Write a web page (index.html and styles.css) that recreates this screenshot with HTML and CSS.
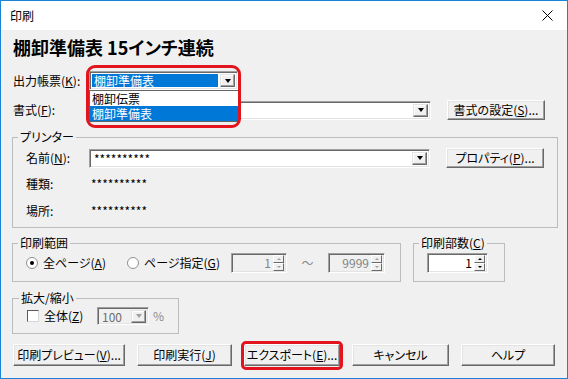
FILE: index.html
```html
<!DOCTYPE html>
<html lang="ja">
<head>
    <meta charset="UTF-8">
    <title>印刷</title>
    <link rel="stylesheet" href="styles.css">
</head>
<body>
    <div class="window">
        <div class="titlebar">
            <span class="title">印刷</span>
            <svg class="close" width="11" height="11" viewBox="0 0 11 11">
                <path d="M0.5 0.5 L10.5 10.5 M10.5 0.5 L0.5 10.5" stroke="#000" stroke-width="1" fill="none"/>
            </svg>
        </div>

        <div class="content">
            <h1 class="heading">棚卸準備表 15インチ連続</h1>

            <div class="row row-report">
                <span class="label">出力帳票(<u>K</u>):</span>
                <div class="combo-wrap">
                    <div class="combo combo-report">
                        <span class="combo-text selected">棚卸準備表</span>
                        <span class="drop-btn"><i class="tri-down"></i></span>
                    </div>
                    <ul class="droplist">
                        <li>棚卸伝票</li>
                        <li class="active">棚卸準備表</li>
                    </ul>
                    <div class="mark mark-combo"></div>
                </div>
            </div>

            <div class="row row-format">
                <span class="label">書式(<u>F</u>):</span>
                <div class="combo combo-wide">
                    <span class="combo-text"></span>
                    <span class="drop-btn"><i class="tri-down"></i></span>
                </div>
                <button class="btn btn-side">書式の設定(<u>S</u>)...</button>
            </div>

            <fieldset class="group group-printer">
                <legend>プリンター</legend>
                <div class="row">
                    <span class="label label-in">名前(<u>N</u>):</span>
                    <div class="combo combo-name">
                        <span class="combo-text stars">**********</span>
                        <span class="drop-btn"><i class="tri-down"></i></span>
                    </div>
                    <button class="btn btn-side">プロパティ(<u>P</u>)...</button>
                </div>
                <div class="row info-row info-kind">
                    <span class="label label-in">種類:</span>
                    <span class="stars value">**********</span>
                </div>
                <div class="row info-row info-place">
                    <span class="label label-in">場所:</span>
                    <span class="stars value">**********</span>
                </div>
            </fieldset>

            <div class="row range-row">
                <fieldset class="group group-range">
                    <legend>印刷範囲</legend>
                    <div class="row">
                        <label class="opt opt-all"><span class="radio checked"></span>全ページ(<u>A</u>)</label>
                        <label class="opt opt-page"><span class="radio"></span>ページ指定(<u>G</u>)</label>
                        <div class="spin spin-from disabled">
                            <span class="spin-val">1</span>
                            <span class="spin-btns"><span class="sb"><i class="tri-up"></i></span><span class="sb"><i class="tri-dn"></i></span></span>
                        </div>
                        <span class="tilde">～</span>
                        <div class="spin spin-to disabled">
                            <span class="spin-val">9999</span>
                            <span class="spin-btns"><span class="sb"><i class="tri-up"></i></span><span class="sb"><i class="tri-dn"></i></span></span>
                        </div>
                    </div>
                </fieldset>
                <fieldset class="group group-copies">
                    <legend>印刷部数(<u>C</u>)</legend>
                    <div class="spin spin-copies">
                        <span class="spin-val">1</span>
                        <span class="spin-btns"><span class="sb"><i class="tri-up"></i></span><span class="sb"><i class="tri-dn"></i></span></span>
                    </div>
                </fieldset>
            </div>

            <fieldset class="group group-zoom">
                <legend>拡大/縮小</legend>
                <div class="row">
                    <label class="opt opt-whole"><span class="check"></span>全体(<u>Z</u>)</label>
                    <div class="combo combo-zoom disabled">
                        <span class="combo-text">100</span>
                        <span class="drop-btn"><i class="tri-down"></i></span>
                    </div>
                    <span class="percent">%</span>
                </div>
            </fieldset>

            <div class="row buttons">
                <button class="btn b-preview">印刷プレビュー(<u>V</u>)...</button>
                <button class="btn b-print">印刷実行(<u>J</u>)</button>
                <div class="btn-wrap">
                    <button class="btn b-export">エクスポート(<u>E</u>)...</button>
                    <div class="mark mark-btn"></div>
                </div>
                <button class="btn b-cancel">キャンセル</button>
                <button class="btn b-help">ヘルプ</button>
            </div>
        </div>
    </div>
</body>
</html>
```

FILE: styles.css
```css
* {
    box-sizing: border-box;
}
body {
    margin: 0;
    font-family: "Noto Sans CJK JP", "Noto Sans", sans-serif;
    font-size: 12px;
    line-height: 14px;
    color: #000;
    font-feature-settings: "palt";
}
u {
    text-decoration-thickness: 1px;
    text-underline-offset: 1px;
}
.window {
    width: 568px;
    height: 379px;
    border: 1px solid #1883d7;
    background-color: #f0f0f0;
    overflow: hidden;
}
.titlebar {
    height: 29px;
    background-color: #fff;
    display: flex;
    align-items: center;
    justify-content: space-between;
    padding: 0 14px 0 9px;
}
.title {
    padding-top: 1px;
}
.content {
    padding: 7px 0 0 11px;
}
.heading {
    margin: 0;
    padding-left: 1px;
    font-size: 18px;
    line-height: 20px;
    font-weight: bold;
}
.row {
    display: flex;
    align-items: center;
}
.label {
    width: 77px;
    padding-left: 1px;
}
.label-in {
    width: 63px;
    padding-left: 0;
}
.row-report {
    margin-top: 14px;
    height: 19px;
}
.row-format {
    margin-top: 10px;
    height: 20px;
}

/* combo box */
.combo-wrap {
    position: relative;
}
.combo {
    height: 19px;
    background-color: #fff;
    border: 1px solid;
    border-color: #a0a0a0 #fff #fff #a0a0a0;
    box-shadow: inset 1px 1px #696969, inset -1px -1px #e3e3e3;
    display: flex;
    align-items: center;
    padding: 2px;
}
.combo-report {
    width: 149px;
}
.combo-wide {
    width: 342px;
}
.combo-name {
    width: 341px;
}
.combo-zoom {
    width: 52px;
    height: 18px;
}
.combo.disabled {
    background-color: #f0f0f0;
    color: #6d6d6d;
}
.combo-text {
    flex: 1;
    height: 13px;
    line-height: 13px;
    padding-left: 2px;
    white-space: nowrap;
}
.combo-text.selected {
    background-color: #0078d7;
    color: #fff;
    outline: 1px dotted #fff;
    margin-right: 2px;
}
.drop-btn {
    width: 15px;
    height: 13px;
    background-color: #f0f0f0;
    border: 1px solid;
    border-color: #e3e3e3 #696969 #696969 #e3e3e3;
    box-shadow: inset -1px -1px #a0a0a0, inset 1px 1px #fff;
    display: flex;
    align-items: center;
    justify-content: center;
}
.tri-down {
    width: 0;
    height: 0;
    border-left: 3.5px solid transparent;
    border-right: 3.5px solid transparent;
    border-top: 4px solid #000;
}
.disabled .tri-down {
    border-top-color: #a0a0a0;
}
.droplist {
    position: absolute;
    left: 0;
    top: 19px;
    width: 150px;
    margin: 0;
    padding: 0;
    list-style: none;
    background-color: #fff;
    border: 1px solid #646464;
    z-index: 2;
}
.droplist li {
    height: 15px;
    line-height: 15px;
    padding-left: 2px;
}
.droplist li.active {
    background-color: #0078d7;
    color: #fff;
}

/* red marks */
.mark {
    position: absolute;
    border: 3px solid #e3141d;
    z-index: 3;
}
.mark-combo {
    left: -3px;
    top: -6px;
    width: 155px;
    height: 63px;
    border-radius: 9px;
}
.btn-wrap {
    position: relative;
}
.mark-btn {
    left: -3px;
    top: -3px;
    right: -3px;
    bottom: -4px;
    border-radius: 5px;
}

/* buttons */
.btn {
    height: 22px;
    padding: 0;
    font: inherit;
    font-feature-settings: "palt";
    color: #000;
    background-color: #f0f0f0;
    border: 1px solid;
    border-color: #fff #696969 #696969 #fff;
    box-shadow: inset -1px -1px #a0a0a0, inset 1px 1px #e3e3e3;
    white-space: nowrap;
}
.btn-side {
    width: 98px;
    height: 20px;
    margin-left: 16px;
}

/* group boxes */
.group {
    margin: 0;
    border: 1px solid #bcbcbc;
    border-radius: 0;
}
.group legend {
    padding: 0 2px;
    line-height: 14px;
    margin-left: -8px;
}
.group-printer {
    width: 543px;
    margin-top: 10px;
    padding: 4px 13px 9px 13px;
}
.info-row {
    height: 14px;
}
.info-kind {
    margin-top: 9px;
}
.info-place {
    margin-top: 13px;
}
.stars {
    letter-spacing: 0;
}
.value {
    padding-left: 2px;
}
.range-row {
    margin-top: 8px;
    align-items: stretch;
    gap: 12px;
}
.group-range {
    width: 389px;
    padding: 3px 13px 8px 13px;
}
.group-copies {
    width: 92px;
    padding: 3px 13px 8px 13px;
}
.group-zoom {
    width: 159px;
    margin-top: 9px;
    padding: 2px 14px 8px 14px;
}

/* options */
.opt {
    display: flex;
    align-items: center;
    white-space: nowrap;
}
.opt-all {
    width: 101px;
}
.opt-page {
    width: 104px;
}
.opt-whole {
    width: 70px;
}
.radio {
    width: 12px;
    height: 12px;
    border-radius: 50%;
    border: 1px solid #8f8f8f;
    background-color: #fff;
    margin-right: 5px;
    display: flex;
    align-items: center;
    justify-content: center;
}
.radio.checked::after {
    content: "";
    width: 4px;
    height: 4px;
    border-radius: 50%;
    background-color: #000;
}
.check {
    width: 12px;
    height: 12px;
    background-color: #fff;
    border: 1px solid;
    border-color: #5a5a5a #d8d8d8 #d8d8d8 #5a5a5a;
    margin-right: 5px;
}
.percent {
    margin-left: 4px;
    color: #8a8a8a;
}

/* spin boxes */
.spin {
    height: 20px;
    background-color: #fff;
    border: 1px solid;
    border-color: #a0a0a0 #fff #fff #a0a0a0;
    box-shadow: inset 1px 1px #696969, inset -1px -1px #e3e3e3;
    display: flex;
    align-items: center;
    padding: 2px;
}
.spin.disabled {
    background-color: #f0f0f0;
    color: #838383;
}
.spin-from {
    width: 56px;
}
.spin-to {
    width: 57px;
}
.spin-copies {
    width: 61px;
}
.spin-val {
    flex: 1;
    text-align: right;
    padding-right: 2px;
}
.spin-btns {
    width: 11px;
    height: 16px;
    display: flex;
    flex-direction: column;
}
.sb {
    flex: 1;
    background-color: #f0f0f0;
    border: 1px solid;
    border-color: #fff #696969 #696969 #fff;
    display: flex;
    align-items: center;
    justify-content: center;
}
.tri-up, .tri-dn {
    width: 0;
    height: 0;
    border-left: 2px solid transparent;
    border-right: 2px solid transparent;
}
.tri-up {
    border-bottom: 2px solid #000;
}
.tri-dn {
    border-top: 2px solid #000;
}
.disabled .tri-up {
    border-bottom-color: #a0a0a0;
}
.disabled .tri-dn {
    border-top-color: #a0a0a0;
}
.tilde {
    width: 41px;
    text-align: center;
    color: #8a8a8a;
}

/* bottom buttons */
.buttons {
    margin-top: 10px;
    padding-left: 1px;
    gap: 12px;
}
.b-preview {
    width: 112px;
}
.b-print {
    width: 95px;
}
.b-export {
    width: 96px;
}
.b-cancel {
    width: 97px;
}
.b-help {
    width: 94px;
}
```
